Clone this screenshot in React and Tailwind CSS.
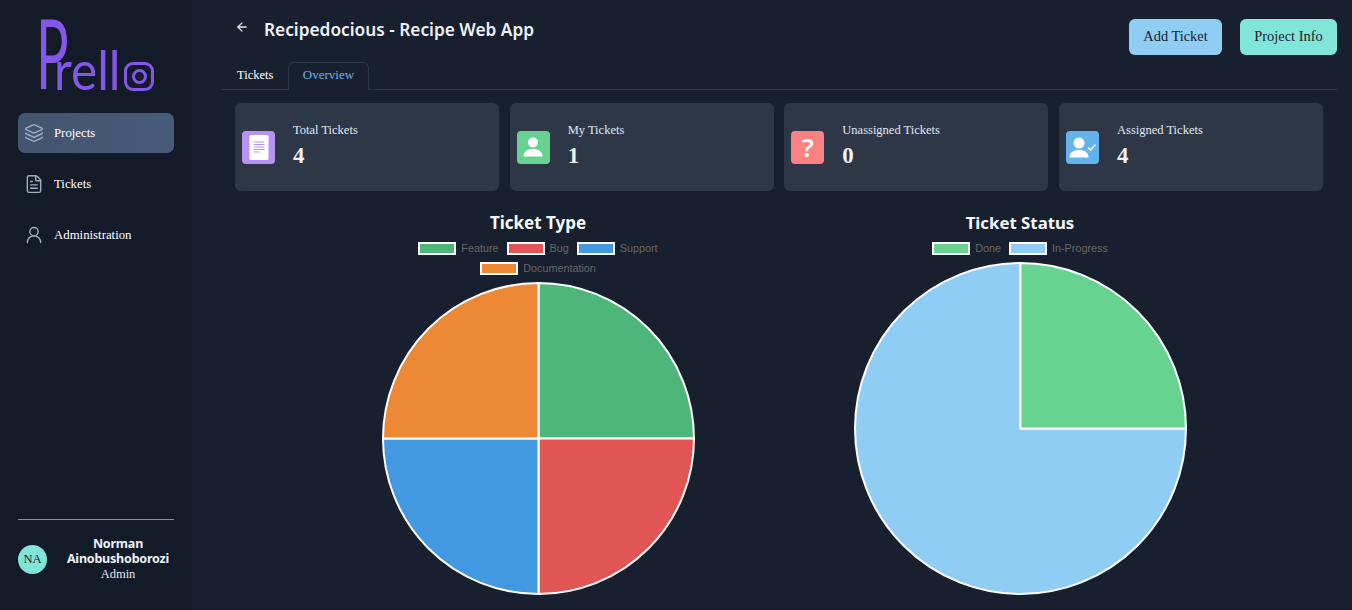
import { ArrowLeft, FileText, Layers, UserRound } from 'lucide-react';

const navItems = [
  { label: 'Projects', Icon: Layers, active: true },
  { label: 'Tickets', Icon: FileText },
  { label: 'Administration', Icon: UserRound },
];

const stats = [
  { label: 'Total Tickets', value: 4, color: 'bg-[#b794f4]', icon: 'doc' },
  { label: 'My Tickets', value: 1, color: 'bg-[#68d391]', icon: 'user' },
  { label: 'Unassigned Tickets', value: 0, color: 'bg-[#fc8181]', icon: 'question' },
  { label: 'Assigned Tickets', value: 4, color: 'bg-[#63b3ed]', icon: 'assigned' },
];

function Logo() {
  return (
    <div aria-label="Prello" className="flex items-end h-[72px] ml-[36px] mt-[19px] text-[#8457e8] font-['Lato',sans-serif] font-normal">
      <span className="block mr-[-40px] text-[97px] leading-[72px] mb-[3px] origin-bottom-left scale-x-[0.56]">P</span>
      <span className="block mr-[-4px] text-[55px] leading-[34px] mb-[5px] origin-bottom-left scale-x-[0.9]">rell</span>
      <div className="w-[30px] h-[29px] rounded-[9px] border-[3px] border-[#8457e8] flex items-center justify-center shrink-0">
        <div className="w-[15px] h-[15px] rounded-full border-[3px] border-[#8457e8]" />
      </div>
    </div>
  );
}

function StatIcon({ type }) {
  if (type === 'doc') {
    return (
      <svg width="20" height="25" viewBox="0 0 20 25">
        <rect x="0.500" width="19" height="25" rx="1.500" fill="#fff" />
        <path d="M4.500 7h11M4.500 9.500h11M4.500 12h11M4.500 14.500h11M4.500 17h6" stroke="#b794f4" strokeWidth="1.200" />
      </svg>
    );
  }
  if (type === 'user') {
    return (
      <svg width="20" height="20" viewBox="0 0 20 20" fill="#fff">
        <circle cx="10" cy="5.500" r="5" />
        <path d="M0.500 19.500c0-5 4-7.500 9.500-7.500s9.500 2.500 9.500 7.500z" />
      </svg>
    );
  }
  if (type === 'question') {
    return <span className="font-['Noto_Sans',sans-serif] font-semibold text-[26px] leading-none text-white">?</span>;
  }
  return (
    <svg width="27" height="21" viewBox="0 0 27 21" fill="#fff">
      <circle cx="10" cy="6" r="5.500" />
      <path d="M0.500 20.500c0-5.500 4-7.500 9.500-7.500s9.500 2 9.500 7.500z" />
      <path d="M19 10.500l2.500 2.500L26.500 7.500" fill="none" stroke="#fff" strokeWidth="1.300" />
    </svg>
  );
}

function Legend({ items, className }) {
  return (
    <div className={`flex flex-wrap justify-center gap-x-[8px] gap-y-[7px] font-['Liberation_Sans',sans-serif] text-[10.800px] leading-[13px] text-[#666] ${className}`}>
      {items.map((item) => (
        <div key={item.label} className="flex items-center gap-[5px]">
          <span className={`block w-[38px] h-[13px] border-2 border-white ${item.color}`} />
          <span>{item.label}</span>
        </div>
      ))}
    </div>
  );
}

function PieType() {
  return (
    <svg width="315" height="315" viewBox="-157.500 -157.500 315 315" className="block ml-[1px]">
      <g stroke="#fff" strokeWidth="2">
        <path d="M0 0V-155.500A155.500 155.500 0 0 1 155.500 0Z" fill="#4fb67a" />
        <path d="M0 0H155.500A155.500 155.500 0 0 1 0 155.500Z" fill="#e25555" />
        <path d="M0 0V155.500A155.500 155.500 0 0 1 -155.500 0Z" fill="#4299e1" />
        <path d="M0 0H-155.500A155.500 155.500 0 0 1 0 -155.500Z" fill="#ed8936" />
      </g>
    </svg>
  );
}

function PieStatus() {
  return (
    <svg width="335" height="335" viewBox="-167.500 -167.500 335 335" className="block ml-[1px]">
      <g stroke="#fff" strokeWidth="2">
        <path d="M0 0H165.500A165.500 165.500 0 1 1 0 -165.500Z" fill="#90cdf4" />
        <path d="M0 0V-165.500A165.500 165.500 0 0 1 165.500 0Z" fill="#68d391" />
      </g>
    </svg>
  );
}

export default function App() {
  return (
    <div className="flex h-[610px] overflow-hidden bg-[#18202f] font-['Liberation_Serif',serif] text-white">
      <aside className="w-[192px] shrink-0 bg-[#141b28] flex flex-col px-[18px]">
        <div className="-mx-[18px]">
          <Logo />
        </div>
        <nav className="mt-[22px] flex flex-col gap-[11px]">
          {navItems.map(({ label, Icon, active }) => (
            <div
              key={label}
              className={`h-[40px] flex items-center rounded-[7px] pl-[6px] text-[12.800px] ${active ? 'bg-gradient-to-r from-[#44546f] to-[#475a78]' : ''}`}
            >
              <Icon size={20} strokeWidth={1.700} className="text-[#a0aec0]" />
              <span className="ml-[10px] mt-[2px]">{label}</span>
            </div>
          ))}
        </nav>
        <div className="mt-auto border-t border-[#8a919e] h-[91px] flex items-start pt-[17px]">
          <div className="w-[29px] h-[29px] mt-[8px] shrink-0 rounded-full bg-[#81e6d9] flex items-center justify-center text-[12.500px] text-[#1a202c]">
            NA
          </div>
          <div className="flex-1 text-center pl-[15px] whitespace-nowrap">
            <div className="font-['Noto_Sans',sans-serif] font-bold text-[12.500px] leading-[14.500px] tracking-[-0.2px] text-[#edf2f7]">
              Norman
              <br />
              Ainobushoborozi
            </div>
            <div className="text-[12.500px] leading-[16px] text-[#e2e8f0]">Admin</div>
          </div>
        </div>
      </aside>

      <main className="flex-1 min-w-0 pl-[29px] pr-[15px]">
        <header className="h-[62px] flex items-start justify-between">
          <div className="flex items-center pl-[14px] pt-[17px]">
            <ArrowLeft size={14} strokeWidth={2.200} className="text-[#e2e8f0] mb-[7px]" />
            <h1 className="ml-[15px] font-['Noto_Sans',sans-serif] font-semibold text-[17.250px] leading-[26px] text-[#edf2f7]">
              Recipedocious - Recipe Web App
            </h1>
          </div>
          <div className="flex gap-[18px] pt-[19px]">
            <button className="w-[93px] h-[36px] pb-[1px] rounded-[6px] bg-[#90cdf4] text-[#1a202c] text-[14.400px]">Add Ticket</button>
            <button className="w-[97px] h-[36px] pb-[1px] rounded-[6px] bg-[#81e6d9] text-[#1a202c] text-[14.400px]">Project Info</button>
          </div>
        </header>

        <div className="flex h-[28px] border-b border-[#2d3748] text-[12.500px]">
          <div className="w-[67px] pl-[16px] pt-[4px]">Tickets</div>
          <div className="w-[81px] h-[28px] rounded-t-[6px] border border-b-0 border-[#2d3748] bg-[#18202f] text-[#63b3ed] text-[13px] text-center pt-[2px]">
            Overview
          </div>
        </div>

        <div className="grid grid-cols-4 gap-[10.670px] w-[1088px] ml-[14px] mt-[13px]">
          {stats.map((s) => (
            <div key={s.label} className="h-[88px] rounded-[6px] bg-[#2d3748] flex items-center pl-[7px]">
              <div className={`w-[33px] h-[33px] shrink-0 rounded-[4px] flex items-center justify-center ${s.color}`}>
                <StatIcon type={s.icon} />
              </div>
              <div className="ml-[18px] -mt-[4px]">
                <div className="text-[12.500px] leading-[16px] text-[#e2e8f0]">{s.label}</div>
                <div className="mt-[5px] font-bold text-[23px] leading-[26px] text-[#edf2f7]">{s.value}</div>
              </div>
            </div>
          ))}
        </div>

        <div className="flex ml-[14px] mt-[21px]">
          <section className="w-[606px] shrink-0 flex flex-col items-center">
            <h2 className="font-['Noto_Sans',sans-serif] font-bold text-[17px] leading-[22px] text-[#f7fafc]">Ticket Type</h2>
            <Legend
              className="w-[320px] mt-[8px]"
              items={[
                { label: 'Feature', color: 'bg-[#4fb67a]' },
                { label: 'Bug', color: 'bg-[#e25555]' },
                { label: 'Support', color: 'bg-[#4299e1]' },
                { label: 'Documentation', color: 'bg-[#ed8936]' },
              ]}
            />
            <div className="mt-[6px]">
              <PieType />
            </div>
          </section>
          <section className="w-[358px] shrink-0 flex flex-col items-center">
            <h2 className="font-['Noto_Sans',sans-serif] font-bold text-[16.800px] leading-[22px] text-[#f7fafc]">Ticket Status</h2>
            <Legend
              className="w-[320px] mt-[8px]"
              items={[
                { label: 'Done', color: 'bg-[#68d391]' },
                { label: 'In-Progress', color: 'bg-[#90cdf4]' },
              ]}
            />
            <div className="mt-[6px]">
              <PieStatus />
            </div>
          </section>
        </div>
      </main>
    </div>
  );
}
